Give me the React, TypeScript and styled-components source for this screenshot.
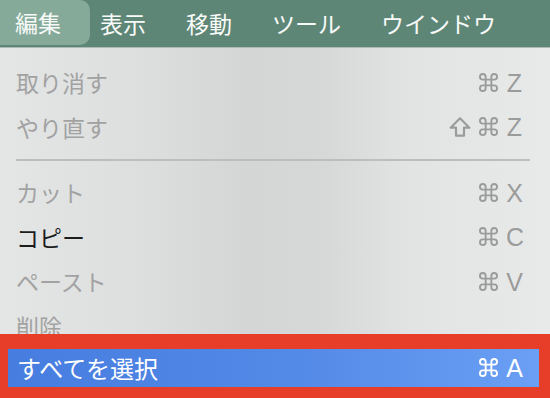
import React from "react";
import styled, { createGlobalStyle } from "styled-components";

const GlobalStyle = createGlobalStyle`
  html, body {
    margin: 0;
    padding: 0;
    width: 550px;
    height: 398px;
    overflow: hidden;
    font-family: "Liberation Sans", "Noto Sans CJK JP", sans-serif;
  }
`;

const Screen = styled.div`
  width: 550px;
  height: 398px;
  display: flex;
  flex-direction: column;
  overflow: hidden;
`;

const MenuBar = styled.div`
  height: 47px;
  display: flex;
  align-items: flex-start;
  background: #5e8676;
  border-bottom: 1px solid #aebab5;
  flex-shrink: 0;
`;

const BarItem = styled.div<{ $active?: boolean }>`
  height: ${(p) => (p.$active ? "45px" : "47px")};
  display: flex;
  align-items: center;
  padding: ${(p) => (p.$active ? "0 29px 0 15px" : "0 30px 0 10px")};
  background: ${(p) => (p.$active ? "#85aa9a" : "transparent")};
  border-radius: ${(p) => (p.$active ? "0 10px 10px 0" : "0")};
  color: #f7faf8;
  font-size: 23px;
  line-height: 1;
  font-family: "Noto Sans CJK JP", sans-serif;
  padding-bottom: ${(p) => (p.$active ? "0" : "2px")};
`;

const Panel = styled.div`
  flex: 1;
  display: flex;
  flex-direction: column;
  padding-top: 12px;
  background: linear-gradient(
    90deg,
    #e4e6e6 0%,
    #dddfdf 25%,
    #d4d6d6 45%,
    #d6d8d8 58%,
    #e2e4e4 75%,
    #e8eaea 100%
  );
`;

const Row = styled.div<{ $disabled?: boolean; $clip?: number }>`
  height: ${(p) => (p.$clip ? `${p.$clip}px` : "44.5px")};
  overflow: hidden;
  display: flex;
  align-items: flex-start;
  justify-content: space-between;
  padding: 0 27px 0 16px;
  flex-shrink: 0;
  color: ${(p) => (p.$disabled ? "#a2a2a2" : "#1c1c1c")};
`;

const Label = styled.span`
  height: 44.5px;
  line-height: 44.5px;
  font-size: 23px;
  font-family: "Noto Sans CJK JP", sans-serif;
`;

const Shortcut = styled.span<{ $light?: boolean }>`
  height: 44.5px;
  display: flex;
  align-items: center;
  gap: 8px;
  color: ${(p) => (p.$light ? "#ffffff" : "#9b9b9b")};
`;

const Key = styled.span`
  font-size: 25px;
  font-family: "Liberation Sans", sans-serif;
  line-height: 1;
  width: 17px;
  text-align: center;
  margin-top: 2px;
`;

const Separator = styled.div`
  height: 21px;
  display: flex;
  align-items: center;
  padding: 0 20px 0 16px;
  flex-shrink: 0;
  &::after {
    content: "";
    flex: 1;
    height: 2px;
    background: #bcbebe;
  }
`;

const Callout = styled.div`
  flex: 1;
  border-style: solid;
  border-color: #e63e28;
  border-width: 15px 11px 11px 8px;
  display: flex;
`;

const Selected = styled.div`
  flex: 1;
  display: flex;
  align-items: center;
  justify-content: space-between;
  padding: 0 16px 0 9px;
  color: #ffffff;
  background: linear-gradient(90deg, #477ddf 0%, #5288e6 50%, #6a9ff4 100%);
  & > ${Label} {
    height: auto;
    line-height: 1;
    font-size: 24px;
    margin-top: 1px;
  }
  & > ${Shortcut} {
    height: auto;
  }
`;

const CommandIcon = () => (
  <svg width="19" height="19" viewBox="2 2 20 20" fill="none" stroke="currentColor" strokeWidth="2" strokeLinecap="round" strokeLinejoin="round">
    <path d="M15 6v12a3 3 0 1 0 3-3H6a3 3 0 1 0 3 3V6a3 3 0 1 0-3 3h12a3 3 0 1 0-3-3" />
  </svg>
);

const ShiftIcon = () => (
  <svg width="22" height="20" viewBox="4 4 16 15" fill="none" stroke="currentColor" strokeWidth="1.6" strokeLinejoin="round">
    <path d="M9 18v-6H5l7-7 7 7h-4v6H9z" />
  </svg>
);

const barItems = ["編集", "表示", "移動", "ツール", "ウインドウ"];

type Item = { label: string; key?: string; shift?: boolean; disabled?: boolean } | "sep";

const items: Item[] = [
  { label: "取り消す", key: "Z", disabled: true },
  { label: "やり直す", key: "Z", shift: true, disabled: true },
  "sep",
  { label: "カット", key: "X", disabled: true },
  { label: "コピー", key: "C" },
  { label: "ペースト", key: "V", disabled: true },
];

export default function App() {
  return (
    <Screen>
      <GlobalStyle />
      <MenuBar>
        {barItems.map((b, i) => (
          <BarItem key={b} $active={i === 0}>
            {b}
          </BarItem>
        ))}
      </MenuBar>
      <Panel>
        {items.map((it, i) =>
          it === "sep" ? (
            <Separator key={i} />
          ) : (
            <Row key={i} $disabled={it.disabled}>
              <Label>{it.label}</Label>
              <Shortcut>
                {it.shift && <ShiftIcon />}
                <CommandIcon />
                <Key>{it.key}</Key>
              </Shortcut>
            </Row>
          )
        )}
        {/* partly covered by the red callout, as in the screenshot */}
        <Row $disabled $clip={30}>
          <Label>削除</Label>
        </Row>
        <Callout>
          <Selected>
            <Label>すべてを選択</Label>
            <Shortcut $light>
              <CommandIcon />
              <Key>A</Key>
            </Shortcut>
          </Selected>
        </Callout>
      </Panel>
    </Screen>
  );
}
